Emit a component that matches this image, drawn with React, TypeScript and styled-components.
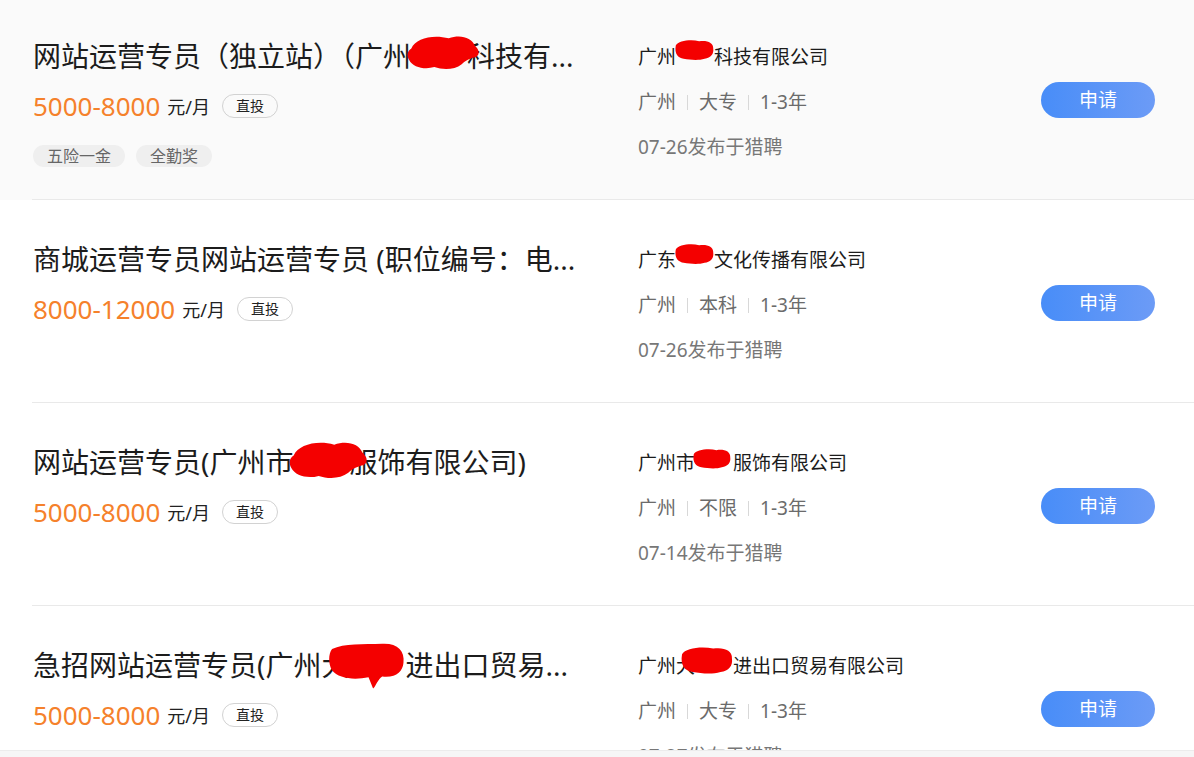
import * as React from "react";
import styled, {createGlobalStyle} from "styled-components";

const GlobalStyle = createGlobalStyle`
  html, body {
    margin: 0;
    padding: 0;
    background: #fff;
  }
  body {
    font-family: "Noto Sans", "Noto Sans CJK SC", sans-serif;
    color: #222;
  }
`;

const Page = styled.div`
  display: flex;
  flex-direction: column;
  width: 1194px;
  height: 757px;
  overflow: hidden;
`;

const List = styled.div`
  height: 750px;
  flex-shrink: 0;
  overflow: hidden;
`;

// the list is scrolled a few pixels
const Track = styled.div`
  margin-top: -3px;
`;

const Footer = styled.div`
  flex: 1;
  background: #f6f6f6;
  border-top: 1px solid #ececec;
`;

const Row = styled.div<{ $active?: boolean }>`
  background: ${({$active}) => $active ? '#fafafa' : '#fff'};
  padding-left: 32px;
`;

const RowInner = styled.div`
  display: flex;
  align-items: flex-start;
  height: 202px;
  padding-left: 1px;
  border-bottom: 1px solid #e9e9e9;
`;

const LeftCol = styled.div`
  width: 605px;
  flex-shrink: 0;
  padding-top: 39px;
`;

const Title = styled.div`
  font-size: 28px;
  line-height: 40px;
  color: #1c1c1c;
  white-space: nowrap;
`;

const SalaryLine = styled.div`
  display: flex;
  align-items: center;
  height: 36px;
  margin-top: 12px;
`;

const Salary = styled.span`
  font-size: 26px;
  color: #f5812b;
`;

const Unit = styled.span`
  font-size: 18px;
  color: #222;
  margin-left: 7px;
`;

const Badge = styled.span`
  margin-left: 12px;
  height: 22px;
  line-height: 22px;
  padding: 0 13px;
  border: 1px solid #d2d2d2;
  border-radius: 12px;
  font-size: 14px;
  color: #222;
`;

const Tags = styled.div`
  display: flex;
  gap: 11px;
  margin-top: 21px;
`;

const Tag = styled.span`
  height: 22px;
  line-height: 22px;
  padding: 0 14px;
  background: #efefef;
  border-radius: 11px;
  font-size: 16px;
  color: #666;
`;

const RightCol = styled.div`
  display: flex;
  flex-direction: column;
  gap: 15px;
  padding-top: 45px;
`;

const Company = styled.div`
  font-size: 19px;
  line-height: 30px;
  color: #1c1c1c;
  white-space: nowrap;
`;

const Meta = styled.div`
  display: flex;
  align-items: center;
  font-size: 19px;
  line-height: 30px;
  color: #6b6b6b;
`;

const Sep = styled.span`
  width: 1px;
  height: 15px;
  background: #d8d8d8;
  margin: 0 11px;
`;

const DateLine = styled.div`
  font-size: 19px;
  line-height: 30px;
  color: #777;
`;

const ApplyButton = styled.button`
  align-self: center;
  margin-top: 4px;
  margin-left: auto;
  margin-right: 39px;
  width: 114px;
  height: 36px;
  border: none;
  border-radius: 18px;
  background: linear-gradient(90deg, #488df8 0%, #6c9bf6 100%);
  color: #fff;
  font-family: inherit;
  font-size: 19px;
  line-height: 36px;
  padding: 0;
`;

const Hidden = styled.span`
  position: relative;
  display: inline-block;
  color: transparent;
`;

const Blob = styled.svg<{ $inset: string }>`
  position: absolute;
  inset: ${({$inset}) => $inset};
  width: auto;
  height: auto;
  overflow: visible;
`;

const blobs = [
    "M6 20 C 12 6, 36 0, 58 6 C 74 0, 90 5, 94 16 C 100 21, 102 28, 96 32 C 88 34, 82 36, 76 42 C 66 50, 50 50, 38 46 C 24 50, 8 46, 3 36 C -1 29, 1 23, 6 20 Z",
    "M2 14 C 8 2, 40 -2, 62 3 C 82 0, 99 6, 98 22 C 100 36, 92 46, 76 48 C 60 53, 40 51, 22 48 C 8 46, -2 36, 2 14 Z",
    "M4 8 C 20 0, 45 2, 70 1 C 90 0, 100 10, 98 26 C 97 38, 88 46, 70 44 C 64 48, 62 56, 58 60 L 52 45 C 34 49, 12 47, 4 36 C -1 28, -1 14, 4 8 Z",
];

const Redact = ({text, inset, shape = 0}: { text: string, inset: string, shape?: number }) => (
    <Hidden>
        {text}
        <Blob $inset={inset} viewBox="0 0 100 50" preserveAspectRatio="none">
            <path d={blobs[shape]} fill="#f40000"/>
        </Blob>
    </Hidden>
);

type Part = { pre: string, hidden?: string, post?: string, inset?: string, shape?: number };

type Job = {
    title: Part;
    salary: string;
    tags?: string[];
    company: Part;
    city: string;
    edu: string;
    exp: string;
    date: string;
    active?: boolean;
};

const jobs: Job[] = [
    {
        title: {pre: "网站运营专员（独立站）（广州", hidden: "某某", post: "科技有...", inset: "-2px -12px -6px -4px", shape: 0},
        salary: "5000-8000",
        tags: ["五险一金", "全勤奖"],
        company: {pre: "广州", hidden: "某某", post: "科技有限公司", inset: "-2px 0 -4px -1px", shape: 1},
        city: "广州", edu: "大专", exp: "1-3年", date: "07-26发布于猎聘", active: true,
    },
    {
        title: {pre: "商城运营专员网站运营专员 (职位编号：电..."},
        salary: "8000-12000",
        company: {pre: "广东", hidden: "某某", post: "文化传播有限公司", inset: "-1px 0 -4px -1px", shape: 1},
        city: "广州", edu: "本科", exp: "1-3年", date: "07-26发布于猎聘",
    },
    {
        title: {pre: "网站运营专员(广州市", hidden: "某某", post: "服饰有限公司)", inset: "-2px -18px -6px -4px", shape: 0},
        salary: "5000-8000",
        company: {pre: "广州市", hidden: "某某", post: "服饰有限公司", inset: "1px 2px -3px -2px", shape: 1},
        city: "广州", edu: "不限", exp: "1-3年", date: "07-14发布于猎聘",
    },
    {
        title: {pre: "急招网站运营专员(广州大", hidden: "某某", post: "进出口贸易...", inset: "-2px 0 -6px -20px", shape: 2},
        salary: "5000-8000",
        company: {pre: "广州大", hidden: "某某", post: "进出口贸易有限公司", inset: "-4px 0 -2px -14px", shape: 1},
        city: "广州", edu: "大专", exp: "1-3年", date: "07-27发布于猎聘",
    },
];

const Text = ({part}: { part: Part }) => (
    <>
        {part.pre}
        {part.hidden && <Redact text={part.hidden} inset={part.inset || "0"} shape={part.shape}/>}
        {part.post}
    </>
);

const JobRow = ({job}: { job: Job }) => (
    <Row $active={job.active}>
        <RowInner>
            <LeftCol>
                <Title><Text part={job.title}/></Title>
                <SalaryLine>
                    <Salary>{job.salary}</Salary>
                    <Unit>元/月</Unit>
                    <Badge>直投</Badge>
                </SalaryLine>
                {job.tags && (
                    <Tags>
                        {job.tags.map(t => <Tag key={t}>{t}</Tag>)}
                    </Tags>
                )}
            </LeftCol>
            <RightCol>
                <Company><Text part={job.company}/></Company>
                <Meta>
                    {job.city}<Sep/>{job.edu}<Sep/>{job.exp}
                </Meta>
                <DateLine>{job.date}</DateLine>
            </RightCol>
            <ApplyButton>申请</ApplyButton>
        </RowInner>
    </Row>
);

export default function App() {
    return (
        <Page>
            <GlobalStyle/>
            <List>
                <Track>
                    {jobs.map((job, i) => <JobRow key={i} job={job}/>)}
                </Track>
            </List>
            <Footer/>
        </Page>
    );
}
